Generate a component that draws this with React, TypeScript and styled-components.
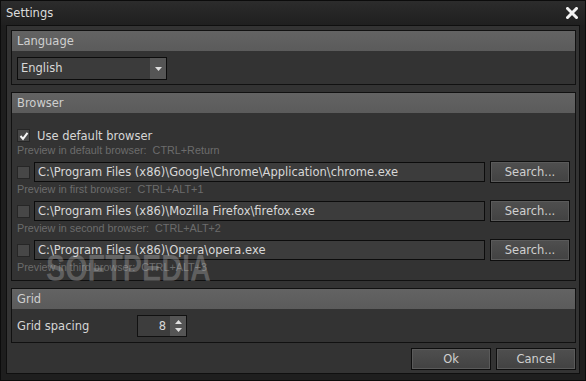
import styled, { createGlobalStyle } from "styled-components";

const GlobalStyle = createGlobalStyle`
  html, body {
    margin: 0;
    padding: 0;
    background: #1e1e1e;
  }
  * {
    box-sizing: border-box;
  }
`;

const browsers = [
  {
    path: "C:\\Program Files (x86)\\Google\\Chrome\\Application\\chrome.exe",
    hint: "Preview in first browser:  CTRL+ALT+1",
  },
  {
    path: "C:\\Program Files (x86)\\Mozilla Firefox\\firefox.exe",
    hint: "Preview in second browser:  CTRL+ALT+2",
  },
  {
    path: "C:\\Program Files (x86)\\Opera\\opera.exe",
    hint: "Preview in third browser:  CTRL+ALT+3",
  },
];

function App() {
  return (
    <Window>
      <GlobalStyle />
      <TitleBar>
        <Title>Settings</Title>
        <CloseIcon width="12" height="12" viewBox="0 0 12 12">
          <path
            d="M1.5 1.5 L10.5 10.5 M10.5 1.5 L1.5 10.5"
            stroke="#f2f2f2"
            strokeWidth="3"
            strokeLinecap="square"
          />
        </CloseIcon>
      </TitleBar>
      <Body>
        <Panel>
          <PanelHeader>Language</PanelHeader>
          <PanelContent $pad="6px 5px 4px">
            <Dropdown>
              <DropdownValue>English</DropdownValue>
              <DropdownArrow>
                <svg width="7" height="4" viewBox="0 0 7 4">
                  <path d="M0 0 H7 L3.5 4 Z" fill="#e0e0e0" />
                </svg>
              </DropdownArrow>
            </Dropdown>
          </PanelContent>
        </Panel>

        <Panel>
          <PanelHeader>Browser</PanelHeader>
          <PanelContent $pad="14px 5px 6px 5px">
            <CheckRow>
              <CheckBox>
                <svg width="10" height="10" viewBox="0 0 10 10">
                  <path
                    d="M1.5 5 L4 7.8 L8.5 1.8"
                    stroke="#f4f4f4"
                    strokeWidth="2"
                    fill="none"
                  />
                </svg>
              </CheckBox>
              <Label>Use default browser</Label>
            </CheckRow>
            <Hint>Preview in default browser:  CTRL+Return</Hint>
            {browsers.map((b) => (
              <BrowserEntry key={b.path}>
                <PathRow>
                  <CheckBox />
                  <PathInput>{b.path}</PathInput>
                  <Button $width={80}>Search...</Button>
                </PathRow>
                <Hint>{b.hint}</Hint>
              </BrowserEntry>
            ))}
          </PanelContent>
        </Panel>

        <Panel>
          <PanelHeader>Grid</PanelHeader>
          <PanelContent $pad="6px 5px 5px">
            <GridRow>
              <Label>Grid spacing</Label>
              <SpinBox>
                <SpinValue>8</SpinValue>
                <SpinButtons>
                  <svg width="7" height="4" viewBox="0 0 7 4">
                    <path d="M0 4 H7 L3.5 0 Z" fill="#e0e0e0" />
                  </svg>
                  <svg width="7" height="4" viewBox="0 0 7 4">
                    <path d="M0 0 H7 L3.5 4 Z" fill="#e0e0e0" />
                  </svg>
                </SpinButtons>
              </SpinBox>
            </GridRow>
          </PanelContent>
        </Panel>

        <Footer>
          <Button $width={80}>Ok</Button>
          <Button $width={80}>Cancel</Button>
        </Footer>
      </Body>
      <Watermark>SOFTPEDIA</Watermark>
    </Window>
  );
}

const Window = styled.div`
  position: relative;
  width: 586px;
  height: 381px;
  background: #1e1e1e;
  border: 1px solid #0c0c0c;
  font-family: "DejaVu Sans", "Liberation Sans", sans-serif;
  color: #d4d4d4;
  display: flex;
  flex-direction: column;
  overflow: hidden;
`;

const TitleBar = styled.div`
  height: 24px;
  flex: none;
  display: flex;
  align-items: center;
  justify-content: space-between;
  padding: 0 7px 0 5px;
  background: linear-gradient(#2c2c2c, #1f1f1f);
`;

const Title = styled.span`
  font-size: 11.5px;
  color: #dcdcdc;
`;

const CloseIcon = styled.svg`
  display: block;
`;

const Body = styled.div`
  margin: 0 5px 6px 5px;
  flex: 1;
  border: 1px solid #0f0f0f;
  background: #333333;
  padding: 4px 3px 3px 4px;
  display: flex;
  flex-direction: column;
  gap: 7px;
`;

const Panel = styled.div`
  border: 1px solid #111111;
  background: #333333;
`;

const PanelHeader = styled.div`
  height: 20px;
  line-height: 20px;
  padding-left: 5px;
  font-size: 11.5px;
  color: #cfcfcf;
  background: linear-gradient(#636363, #5b5b5b);
`;

const PanelContent = styled.div<{ $pad: string }>`
  padding: ${(p) => p.$pad};
  display: flex;
  flex-direction: column;
`;

const Dropdown = styled.div`
  width: 150px;
  height: 23px;
  border: 1px solid #0c0c0c;
  background: #3b3b3b;
  display: flex;
`;

const DropdownValue = styled.div`
  flex: 1;
  padding-left: 3px;
  line-height: 21px;
  font-size: 11.5px;
  color: #d8d8d8;
`;

const DropdownArrow = styled.div`
  width: 16px;
  background: #555555;
  display: flex;
  align-items: center;
  justify-content: center;
`;

const CheckRow = styled.div`
  display: flex;
  align-items: center;
  gap: 7px;
  height: 17px;
`;

const CheckBox = styled.div`
  width: 13px;
  height: 13px;
  flex: none;
  background: #474747;
  border: 1px solid #262626;
  display: flex;
  align-items: center;
  justify-content: center;
`;

const Label = styled.span`
  font-size: 11.5px;
  color: #d6d6d6;
`;

const Hint = styled.div`
  height: 13px;
  line-height: 13px;
  font-family: "Liberation Sans", sans-serif;
  font-size: 10.8px;
  color: #6c6c6c;
  white-space: pre;
`;

const BrowserEntry = styled.div`
  margin-top: 4px;
  display: flex;
  flex-direction: column;
`;

const PathRow = styled.div`
  display: flex;
  align-items: center;
  height: 22px;
  gap: 4px;
`;

const PathInput = styled.div`
  flex: 1;
  height: 20px;
  line-height: 18px;
  padding-left: 3px;
  border: 1px solid #0c0c0c;
  background: #3c3c3c;
  font-size: 11.5px;
  color: #d8d8d8;
  white-space: nowrap;
  overflow: hidden;
  margin-right: 1px;
`;

const Button = styled.div<{ $width: number }>`
  width: ${(p) => p.$width}px;
  height: 22px;
  flex: none;
  border: 1px solid #0e0e0e;
  box-shadow: inset 0 0 0 1px #5a5a5a;
  background: linear-gradient(#4f4f4f, #424242);
  font-size: 11.5px;
  color: #d0d0d0;
  display: flex;
  align-items: center;
  justify-content: center;
`;

const GridRow = styled.div`
  display: flex;
  align-items: center;
  height: 22px;

  & > span {
    width: 120px;
  }
`;

const SpinBox = styled.div`
  width: 50px;
  height: 22px;
  border: 1px solid #111111;
  background: #3d3d3d;
  display: flex;
`;

const SpinValue = styled.div`
  flex: 1;
  text-align: right;
  padding-right: 4px;
  line-height: 20px;
  font-size: 11.5px;
  color: #d8d8d8;
`;

const SpinButtons = styled.div`
  width: 16px;
  background: #555555;
  display: flex;
  flex-direction: column;
  align-items: center;
  justify-content: center;
  gap: 4px;
`;

const Footer = styled.div`
  margin-top: -2px;
  display: flex;
  justify-content: flex-end;
  gap: 5px;
`;

const Watermark = styled.div`
  position: absolute;
  left: 45px;
  top: 247px;
  font-family: "Liberation Sans", sans-serif;
  font-weight: bold;
  font-size: 36px;
  transform: scaleX(0.8);
  transform-origin: left top;
  color: rgba(210, 210, 210, 0.28);
  pointer-events: none;
`;

export default App;
